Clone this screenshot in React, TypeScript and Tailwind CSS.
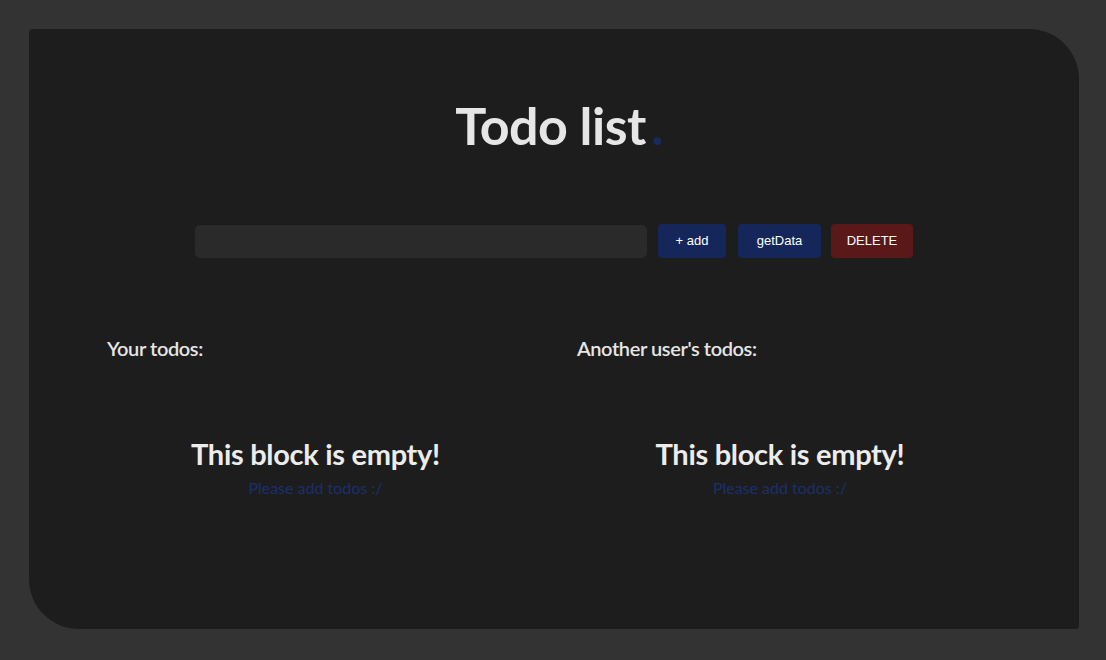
export default function App() {
  const font = { fontFamily: "Lato, 'Noto Sans', sans-serif" };

  return (
    <div className="w-full h-[660px] bg-[#333333] pt-[29px] pl-[29px]" style={font}>
      <div className="w-[1050px] h-[600px] bg-[#1d1d1d] rounded-tl-[4px] rounded-br-[4px] rounded-tr-[50px] rounded-bl-[50px] flex flex-col items-center">
        {/* Title */}
        <h1 className="pt-[70px] pl-[10px] text-[52px] leading-none font-bold text-[#e6e6e6] tracking-[-0.5px]">
          Todo list<span className="ml-[5px] text-[#1b2a5c]">.</span>
        </h1>

        {/* Input row */}
        <div
          className="mt-[73px] flex items-center"
          style={{ fontFamily: "'Liberation Sans', Arial, sans-serif" }}
        >
          <input
            type="text"
            className="w-[452px] h-[33px] rounded-[5px] bg-[#2a2a2a] outline-none px-3 text-[#e6e6e6] text-sm"
          />
          <button className="ml-[11px] w-[68px] h-[34px] rounded-[4px] bg-[#15275a] text-white text-[13px]">
            + add
          </button>
          <button className="ml-[12px] w-[83px] h-[34px] rounded-[4px] bg-[#15275a] text-white text-[13px]">
            getData
          </button>
          <button className="ml-[10px] w-[82px] h-[34px] rounded-[4px] bg-[#5a1818] text-white text-[13px]">
            DELETE
          </button>
        </div>

        {/* Todo columns */}
        <div className="mt-[80px] w-full flex pl-[78px]">
          <div className="w-[417px] flex flex-col">
            <h2 className="text-[20px] leading-none font-semibold text-[#e6e6e6] tracking-[-0.4px]">Your todos:</h2>
            <div className="mt-[81px] flex flex-col items-center">
              <p className="text-[29px] leading-none font-bold text-[#ececec] tracking-[-0.3px]">This block is empty!</p>
              <p className="mt-[12px] text-[16px] leading-none text-[#1b2f6e]">Please add todos :/</p>
            </div>
          </div>
          <div className="ml-[53px] w-[406px] flex flex-col">
            <h2 className="text-[20px] leading-none font-semibold text-[#e6e6e6] tracking-[-0.4px]">Another user's todos:</h2>
            <div className="mt-[81px] flex flex-col items-center">
              <p className="text-[29px] leading-none font-bold text-[#ececec] tracking-[-0.3px]">This block is empty!</p>
              <p className="mt-[12px] text-[16px] leading-none text-[#1b2f6e]">Please add todos :/</p>
            </div>
          </div>
        </div>
      </div>
    </div>
  );
}
